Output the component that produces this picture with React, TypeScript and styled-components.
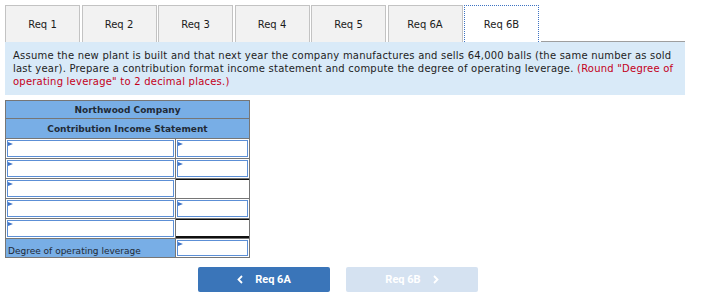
import React from "react";
import styled, { createGlobalStyle, css } from "styled-components";

const Global = createGlobalStyle`
  html, body { margin: 0; padding: 0; background: #ffffff; }
  body { font-family: "DejaVu Sans", Verdana, sans-serif; }
`;

const Page = styled.div`
  width: 717px;
  height: 303px;
  padding: 5px 0 0 5px;
  box-sizing: border-box;
  display: flex;
  flex-direction: column;
`;

const TabBar = styled.div`
  display: flex;
  width: 680px;
  height: 37px;
  gap: 1.5px;
`;

const Tab = styled.div<{ $active?: boolean }>`
  width: 75px;
  box-sizing: border-box;
  display: flex;
  align-items: center;
  justify-content: center;
  font-size: 10px;
  color: #1b1b1b;
  background: #f2f2f2;
  border: 1px solid #c3c3c3;
  border-bottom: none;
  ${(p) =>
    p.$active &&
    css`
      background: #ffffff;
      border: 1px dotted #3d72c2;
      border-bottom: none;
    `}
`;

const TabFiller = styled.div`
  flex: 1;
  border-bottom: 1px solid #9e9e9e;
`;

const Prompt = styled.div`
  width: 680px;
  height: 53px;
  box-sizing: border-box;
  background: #d9eaf8;
  padding: 7px 8px 0 8px;
  font-size: 10px;
  line-height: 13px;
  color: #1d1d1d;
  letter-spacing: 0.22px;
  white-space: nowrap;
`;

const Note = styled.span`
  color: #c4001a;
`;

const Statement = styled.div`
  margin-top: 5px;
  width: 245px;
  box-sizing: border-box;
  border: 1px solid #767676;
  display: flex;
  flex-direction: column;
`;

const HeadRow = styled.div<{ $h: number }>`
  height: ${(p) => p.$h}px;
  box-sizing: border-box;
  background: #78aee6;
  border-bottom: 1px solid #767676;
  display: flex;
  align-items: center;
  justify-content: center;
  font-size: 9px;
  font-weight: bold;
  color: #1f2a36;
`;

const Row = styled.div<{ $last?: boolean }>`
  display: grid;
  grid-template-columns: 170px 1fr;
  height: ${(p) => (p.$last ? "18px" : "20px")};
  box-sizing: border-box;
  border-bottom: ${(p) => (p.$last ? "none" : "1px solid #767676")};
`;

const LeftCell = styled.div<{ $label?: boolean }>`
  border-right: 1px solid #767676;
  padding: 1px;
  box-sizing: border-box;
  display: flex;
  align-items: stretch;
  background: ${(p) => (p.$label ? "#78aee6" : "#ffffff")};
`;

const RightCell = styled.div<{ $top?: boolean; $double?: boolean }>`
  padding: 1px;
  box-sizing: border-box;
  display: flex;
  align-items: stretch;
  background: #ffffff;
  border-top: ${(p) => (p.$top ? "1px solid #111" : "none")};
  border-bottom: ${(p) => (p.$double ? "2px solid #111" : "none")};
`;

const Field = styled.div`
  flex: 1;
  position: relative;
  border: 1px solid #5c8fd6;
  background: #ffffff;
  &::before {
    content: "";
    position: absolute;
    left: 0;
    top: 1px;
    border-left: 5px solid #3f75c8;
    border-top: 2.5px solid transparent;
    border-bottom: 2.5px solid transparent;
  }
`;

const Label = styled.span`
  align-self: flex-end;
  font-size: 9px;
  color: #1f2a36;
  padding: 0 0 0 1px;
`;

const Nav = styled.div`
  display: flex;
  gap: 16px;
  margin-top: 9px;
  padding-left: 193px;
`;

const NavButton = styled.div<{ $disabled?: boolean }>`
  width: 132px;
  height: 25px;
  border-radius: 2px;
  display: flex;
  align-items: center;
  justify-content: center;
  gap: 12px;
  font-family: Roboto, "Liberation Sans", Arial, sans-serif;
  font-weight: bold;
  font-size: 11px;
  color: #ffffff;
  background: ${(p) => (p.$disabled ? "#d5e2f1" : "#3a75b9")};
`;

const Chevron = ({ dir }: { dir: "left" | "right" }) => (
  <svg width="6" height="9" viewBox="0 0 6 9">
    <polyline
      points={dir === "left" ? "5,1 1.5,4.5 5,8" : "1,1 4.5,4.5 1,8"}
      fill="none"
      stroke="#ffffff"
      strokeWidth="1.8"
    />
  </svg>
);

const tabs = ["Req 1", "Req 2", "Req 3", "Req 4", "Req 5", "Req 6A", "Req 6B"];

type RowSpec = { right: "field" | "top" | "double" };
const rows: RowSpec[] = [
  { right: "field" },
  { right: "field" },
  { right: "top" },
  { right: "field" },
  { right: "double" },
];

export default function App() {
  return (
    <>
      <Global />
      <Page>
        <TabBar>
          {tabs.map((t) => (
            <Tab key={t} $active={t === "Req 6B"}>
              {t}
            </Tab>
          ))}
          <TabFiller />
        </TabBar>
        <Prompt>
          Assume the new plant is built and that next year the company manufactures and sells 64,000 balls (the same number as sold
          <br />
          last year). Prepare a contribution format income statement and compute the degree of operating leverage.{" "}
          <Note>
            (Round "Degree of
            <br />
            operating leverage" to 2 decimal places.)
          </Note>
        </Prompt>
        <Statement>
          <HeadRow $h={18}>Northwood Company</HeadRow>
          <HeadRow $h={20}>Contribution Income Statement</HeadRow>
          {rows.map((r, i) => (
            <Row key={i}>
              <LeftCell>
                <Field />
              </LeftCell>
              <RightCell $top={r.right !== "field"} $double={r.right === "double"}>
                {r.right === "field" && <Field />}
              </RightCell>
            </Row>
          ))}
          <Row $last>
            <LeftCell $label>
              <Label>Degree of operating leverage</Label>
            </LeftCell>
            <RightCell>
              <Field />
            </RightCell>
          </Row>
        </Statement>
        <Nav>
          <NavButton>
            <Chevron dir="left" />
            <span>Req 6A</span>
          </NavButton>
          <NavButton $disabled>
            <span>Req 6B</span>
            <Chevron dir="right" />
          </NavButton>
        </Nav>
      </Page>
    </>
  );
}
